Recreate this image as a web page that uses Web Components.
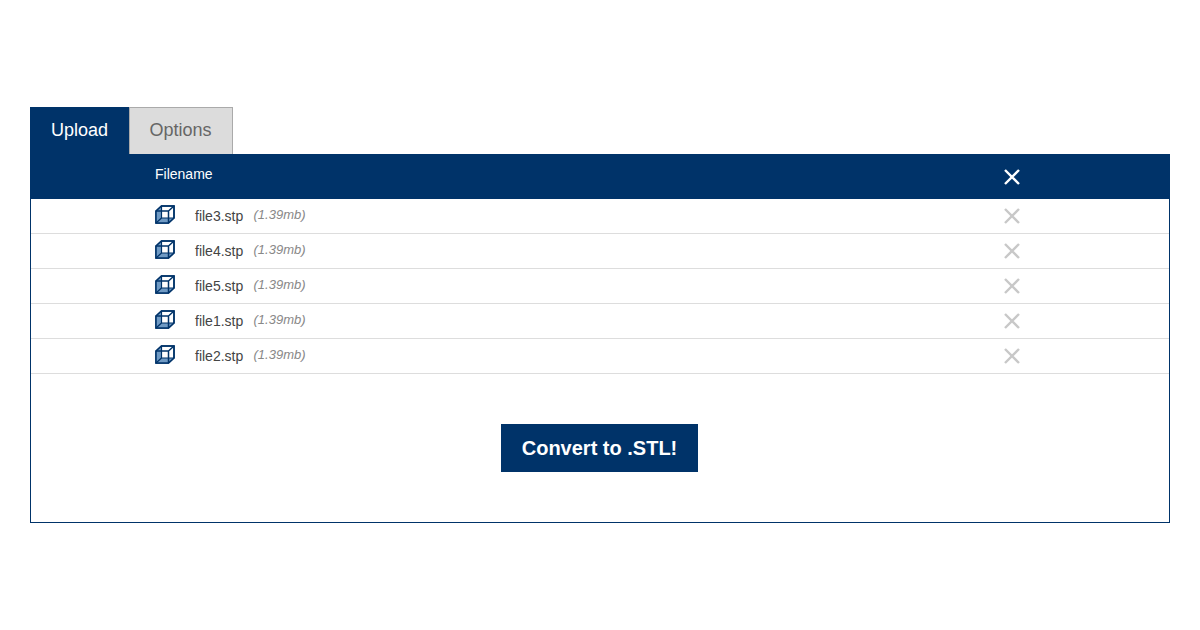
<!DOCTYPE html>
<html lang="en"><head><meta charset="utf-8"><title>Convert to STL</title>
<style>
html,body{margin:0;background:#fff}
body{font-family:"Liberation Sans",Arial,sans-serif;padding:107px 30px 0;height:523px;overflow:hidden}
</style></head><body>
<upload-widget>
  <tab-item slot="tabs" active>Upload</tab-item>
  <tab-item slot="tabs">Options</tab-item>
  <file-header slot="head"></file-header>
  <file-row name="file3.stp" size="(1.39mb)"></file-row>
  <file-row name="file4.stp" size="(1.39mb)"></file-row>
  <file-row name="file5.stp" size="(1.39mb)"></file-row>
  <file-row name="file1.stp" size="(1.39mb)"></file-row>
  <file-row name="file2.stp" size="(1.39mb)"></file-row>
  <convert-button slot="action">Convert to .STL!</convert-button>
</upload-widget>
<script>
const X = c => `<svg width="18" height="18" viewBox="0 0 18 18" fill="none" stroke="${c}" stroke-width="2.4"><path d="M2 2 16 16M16 2 2 16"/></svg>`;
const CUBE = `<svg width="20" height="19" viewBox="0 0 20 19" fill="none" stroke="#003369" stroke-width="1.5">
<path d="M1 6 6.5 1H19V13L13.5 18H1Z" fill="#fff"/>
<path d="M1 6V18L6.5 13V1ZM1 18H13.5L19 13H6.5Z" fill="#6f9ac4" stroke="none"/>
<path d="M6.5 1V13H19M6.5 13 1 18" stroke-width="1.2"/>
<path d="M1 6 6.5 1H19V13L13.5 18H1Z"/>
<path d="M1 6H13.5V18M13.5 6 19 1"/>
</svg>`;
class Base extends HTMLElement{
  render(h){ this.attachShadow({mode:"open"}).innerHTML=h; }
}
customElements.define("upload-widget",class extends Base{connectedCallback(){this.render(`<style>
:host{display:block;width:1140px}
.tabs{display:flex;height:47px}
.panel{box-sizing:border-box;height:369px;border:1px solid #003369;border-top:0;display:flex;flex-direction:column}
.foot{display:flex;justify-content:center;padding:50px 1px 0 0}
</style><div class="tabs"><slot name="tabs"></slot></div>
<div class="panel"><slot name="head"></slot><slot></slot><div class="foot"><slot name="action"></slot></div></div>`)}});
customElements.define("tab-item",class extends Base{connectedCallback(){this.render(`<style>
:host{display:flex;align-items:center;justify-content:center;box-sizing:border-box;font-size:18px;padding:0 1px 1px 0;
 width:104px;margin-left:-1px;background:#dcdcdc;color:#666;border:1px solid #aaa;border-bottom:0}
:host([active]){width:100px;margin-left:0;background:#003369;color:#fff;border:0}
</style><slot></slot>`)}});
customElements.define("file-header",class extends Base{connectedCallback(){this.render(`<style>
:host{display:grid;grid-template-columns:848px 18px;align-items:center;height:45px;margin:0 -1px;background:#003369;color:#fff;font-size:14px;padding-left:125px}
span{position:relative;top:-3px}
svg{display:block}
</style><span>Filename</span>${X("#fff")}`)}});
customElements.define("file-row",class extends Base{connectedCallback(){this.render(`<style>
:host{display:grid;grid-template-columns:40px 58.5px 749.5px 18px;align-items:center;box-sizing:border-box;height:35px;border-bottom:1px solid #ddd;padding-left:124px;font-size:14px;color:#444}
.size{font-style:italic;font-size:13px;color:#888;position:relative;top:-2px}
.x{margin-top:-1px}
.ic{display:block;height:19px;margin-top:-3px}
svg{display:block}
</style><span class="ic">${CUBE}</span><span class="n">${this.getAttribute("name")}</span><span class="size">${this.getAttribute("size")}</span><span class="x">${X("#c8c8c8")}</span>`)}});
customElements.define("convert-button",class extends Base{connectedCallback(){this.render(`<style>
:host{display:flex;align-items:center;justify-content:center;width:197px;height:48px;background:#003369;color:#fff;font-weight:bold;font-size:20px}
</style><slot></slot>`)}});
</script></body></html>
